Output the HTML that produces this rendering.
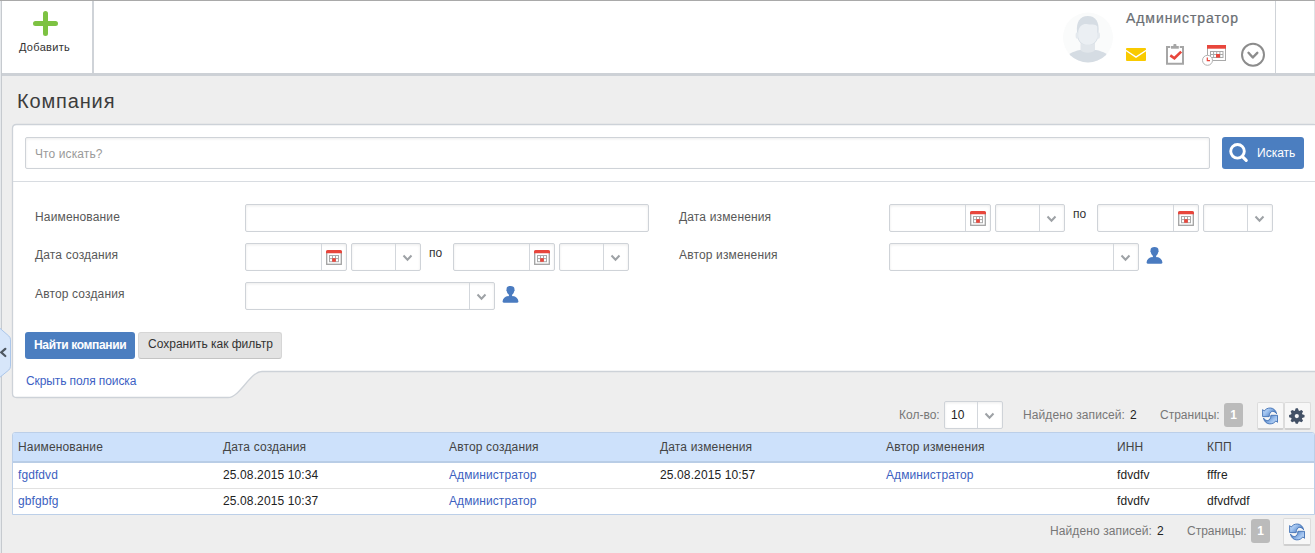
<!DOCTYPE html>
<html><head><meta charset="utf-8">
<style>
*{box-sizing:border-box;}
html,body{margin:0;padding:0;}
body{width:1315px;height:553px;overflow:hidden;background:#eeeeee;position:relative;font-family:"Liberation Sans",sans-serif;font-size:12px;color:#333;}
.a{position:absolute;}
.t{position:absolute;white-space:nowrap;line-height:14px;font-size:12px;}
.inp{position:absolute;background:#fff;border:1px solid #cfd3d8;border-radius:2px;box-shadow:inset 0 1px 3px rgba(0,0,0,0.08);}
.div{position:absolute;top:0;bottom:0;width:1px;background:#d3d7dc;}
.chev{position:absolute;}
</style></head><body>

<!-- left page border -->
<div class="a" style="left:0;top:0;width:1px;height:553px;background:#e6e9ec"></div>
<div class="a" style="left:1px;top:0;width:1px;height:553px;background:#c6cacf"></div>

<!-- HEADER -->
<div class="a" style="left:0;top:0;width:1315px;height:1px;background:#a9a9a9;z-index:2"></div>
<div class="a" style="left:2px;top:0;width:1313px;height:73px;background:#fff;border-top:1px solid #a9a9a9;"></div>
<div class="a" style="left:2px;top:73px;width:1313px;height:3px;background:#cdd1d6"></div>
<div class="a" style="left:92px;top:1px;width:2px;height:72px;background:#cfd3d8"></div>
<div class="a" style="left:1275px;top:1px;width:1px;height:72px;background:#cfd3d8"></div>
<div class="a" style="left:1314px;top:1px;width:1px;height:72px;background:#dfe2e6"></div>

<!-- add -->
<svg class="a" style="left:30px;top:8px" width="30" height="30" viewBox="0 0 30 30">
 <path d="M15.5 5.5V25.5M5.5 15.5H25.5" stroke="#7dc242" stroke-width="5" stroke-linecap="round"/>
</svg>
<div class="t" style="left:19px;top:40px;color:#333;font-size:11px;letter-spacing:0.3px">Добавить</div>

<!-- avatar -->
<svg class="a" style="left:1062px;top:12px" width="52" height="52" viewBox="0 0 52 52">
 <defs><clipPath id="avc"><circle cx="26" cy="25.5" r="25"/></clipPath></defs>
 <circle cx="26" cy="25.5" r="25" fill="#fafbfb"/>
 <g clip-path="url(#avc)">
  <path d="M-2 58 C0 45 8 40 18 38 L34 38 C44 40 52 45 54 58Z" fill="#d5dce3"/>
  <path d="M18.5 27 L18.5 38 C21 41.5 30.5 41.5 33 38 L33 27Z" fill="#e1e6eb"/>
  <path d="M15 20 C14 10 18 4 25.8 4 C33.5 4 37.5 10 36.5 20 L36 25 C35.5 30 31.5 33 25.8 33 C20 33 16 30 15.5 25Z" fill="#d6dde4"/>
  <ellipse cx="15.2" cy="23.5" rx="1.6" ry="3.2" fill="#e4e9ee"/>
  <ellipse cx="36.4" cy="23.5" rx="1.6" ry="3.2" fill="#e4e9ee"/>
  <path d="M16.3 19 C17.5 13.5 21.5 11 26 12.2 C29.5 13 33 11.5 35.3 14.5 L35.3 24 C35 29.8 31 32.8 25.8 32.8 C20.5 32.8 16.5 29.8 16.3 24Z" fill="#ebeff3"/>
 </g>
</svg>
<div class="t" style="left:1126px;top:10px;font-size:14px;line-height:16px;color:#6a6e73;letter-spacing:0.92px;-webkit-text-stroke:0.2px #6a6e73">Администратор</div>
<!-- mail -->
<svg class="a" style="left:1126px;top:48px" width="20" height="13" viewBox="0 0 20 13">
 <rect x="0" y="0" width="20" height="13" rx="1" fill="#f9ca00"/>
 <path d="M-0.5 2.2 L10 9.2 L20.5 2.2" stroke="#fff" stroke-width="1.4" fill="none" stroke-linejoin="round"/>
</svg>
<!-- clipboard -->
<svg class="a" style="left:1165px;top:43px" width="21" height="23" viewBox="0 0 21 23">
 <path d="M5.2 4 H2 V20.7 H18 V4 H14.8" stroke="#a6a6a6" stroke-width="2" fill="none"/>
 <rect x="6" y="3" width="7.8" height="2.7" fill="#a6a6a6"/>
 <rect x="8.4" y="1" width="3" height="3" rx="0.8" fill="#a6a6a6"/>
 <path d="M5.3 12.4 L9.4 15.3 L16.2 8.6" stroke="#e8463c" stroke-width="2.6" fill="none"/>
</svg>
<!-- calendar w/ clock -->
<svg class="a" style="left:1200px;top:44px" width="28" height="24" viewBox="0 0 28 24">
 <rect x="7.5" y="1.5" width="18" height="15" fill="#fff" stroke="#a9a9a9" stroke-width="1"/>
 <rect x="7" y="1" width="19" height="3.7" fill="#e8463c"/>
 <rect x="10.5" y="7.5" width="12.5" height="6" fill="#fff" stroke="#a9a9a9" stroke-width="1"/>
 <path d="M13.6 7.5V13.5M16.7 7.5V13.5M19.9 7.5V13.5M10.5 10.5H23" stroke="#a9a9a9" stroke-width="1"/>
 <rect x="16" y="10" width="4" height="3.6" fill="#e8463c"/>
 <circle cx="7.5" cy="16.3" r="5" fill="#fff" stroke="#b3b3b3" stroke-width="1"/>
 <path d="M7.3 13.5V16.6H10" stroke="#e8463c" stroke-width="1.2" fill="none"/>
</svg>
<!-- chevron circle -->
<svg class="a" style="left:1240px;top:42px" width="26" height="26" viewBox="0 0 26 26">
 <circle cx="13" cy="12.8" r="11" fill="none" stroke="#8c8c8c" stroke-width="2"/>
 <path d="M8.5 10.8 L12.8 15.5 L17.3 10.8" stroke="#8c8c8c" stroke-width="2.4" fill="none" stroke-linecap="round" stroke-linejoin="round"/>
</svg>

<!-- PAGE TITLE -->
<div class="t" style="left:17px;top:89px;font-size:20px;line-height:24px;color:#3c3c3c;letter-spacing:0.85px">Компания</div>


<!-- PANEL -->
<svg class="a" style="left:0;top:120px" width="1315" height="282" viewBox="0 120 1315 282">
 <path d="M12.5 128.5 Q12.5 124.5 16.5 124.5 L1313.5 124.5 Q1317.5 124.5 1317.5 128.5 L1317.5 371.5 L262 371.5 C250 371.5 240 397.5 228 397.5 L16.5 397.5 Q12.5 397.5 12.5 393.5 Z" fill="#fff" stroke="#cdd2d8" stroke-width="1.3"/>
 <path d="M13 181.5 H1315" stroke="#d8dce1" stroke-width="1"/>
</svg>
<!-- search -->
<div class="inp" style="left:25px;top:137px;width:1185px;height:32px;"></div>
<div class="t" style="left:35px;top:147px;color:#9a9a9a;font-size:12px;letter-spacing:0.1px">Что искать?</div>
<div class="a" style="left:1222px;top:137px;width:82px;height:32px;background:#4b7ec0;border-radius:3px"></div>
<svg class="a" style="left:1226px;top:140px" width="26" height="26" viewBox="0 0 26 26">
 <circle cx="11.5" cy="11.3" r="6.8" fill="none" stroke="#fff" stroke-width="2.9"/>
 <path d="M17.2 17.3 L20.2 20.3" stroke="#fff" stroke-width="3.2" stroke-linecap="round"/>
</svg>
<div class="t" style="left:1257px;top:146px;color:#fff;font-size:12px">Искать</div>

<!-- FORM -->
<div class="t" style="left:35px;top:210px;color:#585858;letter-spacing:0.15px">Наименование</div>
<div class="inp" style="left:245px;top:204px;width:404px;height:28px"></div>
<div class="t" style="left:35px;top:248px;color:#585858;letter-spacing:0.15px">Дата создания</div>
<div class="inp" style="left:245px;top:243px;width:102px;height:28px"></div>
<div class="a" style="left:321px;top:244px;width:1px;height:26px;background:#d3d7dc"></div>
<svg class="a" style="left:326px;top:250px" width="16" height="15" viewBox="0 0 16 15">
 <rect x="0.7" y="1.5" width="14.6" height="12.8" fill="#fff" stroke="#a2a2a2" stroke-width="1.3"/>
 <path d="M0 3.2 V1.5 Q0 0 1.5 0 H14.5 Q16 0 16 1.5 V3.2Z" fill="#e8463c"/>
 <rect x="3.5" y="5.5" width="9" height="6.2" fill="#fff" stroke="#aaa" stroke-width="1"/>
 <path d="M6.5 5.5V11.7M9.5 5.5V11.7M3.5 8.6H12.5" stroke="#aaa" stroke-width="1"/>
 <rect x="6.2" y="8.2" width="3.6" height="3.6" fill="#e8463c"/>
</svg>
<div class="inp" style="left:351px;top:243px;width:70px;height:28px"></div>
<div class="a" style="left:395px;top:244px;width:1px;height:26px;background:#d3d7dc"></div>
<svg class="a" style="left:402px;top:254px" width="11" height="8" viewBox="0 0 11 8">
 <path d="M1.5 1.5 L5.5 5.8 L9.5 1.5" stroke="#9ea2a6" stroke-width="2" fill="none"/>
</svg>
<div class="t" style="left:429px;top:246px;color:#333;">по</div>
<div class="inp" style="left:453px;top:243px;width:102px;height:28px"></div>
<div class="a" style="left:529px;top:244px;width:1px;height:26px;background:#d3d7dc"></div>
<svg class="a" style="left:534px;top:250px" width="16" height="15" viewBox="0 0 16 15">
 <rect x="0.7" y="1.5" width="14.6" height="12.8" fill="#fff" stroke="#a2a2a2" stroke-width="1.3"/>
 <path d="M0 3.2 V1.5 Q0 0 1.5 0 H14.5 Q16 0 16 1.5 V3.2Z" fill="#e8463c"/>
 <rect x="3.5" y="5.5" width="9" height="6.2" fill="#fff" stroke="#aaa" stroke-width="1"/>
 <path d="M6.5 5.5V11.7M9.5 5.5V11.7M3.5 8.6H12.5" stroke="#aaa" stroke-width="1"/>
 <rect x="6.2" y="8.2" width="3.6" height="3.6" fill="#e8463c"/>
</svg>
<div class="inp" style="left:559px;top:243px;width:70px;height:28px"></div>
<div class="a" style="left:603px;top:244px;width:1px;height:26px;background:#d3d7dc"></div>
<svg class="a" style="left:610px;top:254px" width="11" height="8" viewBox="0 0 11 8">
 <path d="M1.5 1.5 L5.5 5.8 L9.5 1.5" stroke="#9ea2a6" stroke-width="2" fill="none"/>
</svg>
<div class="t" style="left:35px;top:287px;color:#585858;letter-spacing:0.15px">Автор создания</div>
<div class="inp" style="left:245px;top:282px;width:250px;height:28px"></div>
<div class="a" style="left:469px;top:283px;width:1px;height:26px;background:#d3d7dc"></div>
<svg class="a" style="left:476px;top:293px" width="11" height="8" viewBox="0 0 11 8">
 <path d="M1.5 1.5 L5.5 5.8 L9.5 1.5" stroke="#9ea2a6" stroke-width="2" fill="none"/>
</svg>
<svg class="a" style="left:502px;top:285px" width="17" height="18" viewBox="0 0 17 18">
 <path d="M4.6 3.6 C4.6 1.8 6.1 0.9 8.5 0.9 C10.9 0.9 12.4 1.8 12.4 3.6 V4.6 C12.9 4.9 12.8 5.8 12.3 6.1 C11.9 8.3 10.5 10.2 8.5 10.2 C6.5 10.2 5.1 8.3 4.7 6.1 C4.2 5.8 4.1 4.9 4.6 4.6Z" fill="#4a7bc0"/>
 <rect x="6.9" y="9" width="3.2" height="3" fill="#4a7bc0"/>
 <path d="M0.6 16.3 C0.9 13.3 3 11.6 6.3 11.1 L8.5 11.9 L10.7 11.1 C14 11.6 16.1 13.3 16.4 16.3 C16.5 17.2 16.1 17.7 15.2 17.7 H1.8 C0.9 17.7 0.5 17.2 0.6 16.3Z" fill="#4a7bc0"/>
</svg>
<div class="t" style="left:679px;top:210px;color:#585858;letter-spacing:0.15px">Дата изменения</div>
<div class="inp" style="left:889px;top:204px;width:102px;height:28px"></div>
<div class="a" style="left:965px;top:205px;width:1px;height:26px;background:#d3d7dc"></div>
<svg class="a" style="left:970px;top:211px" width="16" height="15" viewBox="0 0 16 15">
 <rect x="0.7" y="1.5" width="14.6" height="12.8" fill="#fff" stroke="#a2a2a2" stroke-width="1.3"/>
 <path d="M0 3.2 V1.5 Q0 0 1.5 0 H14.5 Q16 0 16 1.5 V3.2Z" fill="#e8463c"/>
 <rect x="3.5" y="5.5" width="9" height="6.2" fill="#fff" stroke="#aaa" stroke-width="1"/>
 <path d="M6.5 5.5V11.7M9.5 5.5V11.7M3.5 8.6H12.5" stroke="#aaa" stroke-width="1"/>
 <rect x="6.2" y="8.2" width="3.6" height="3.6" fill="#e8463c"/>
</svg>
<div class="inp" style="left:995px;top:204px;width:70px;height:28px"></div>
<div class="a" style="left:1039px;top:205px;width:1px;height:26px;background:#d3d7dc"></div>
<svg class="a" style="left:1046px;top:215px" width="11" height="8" viewBox="0 0 11 8">
 <path d="M1.5 1.5 L5.5 5.8 L9.5 1.5" stroke="#9ea2a6" stroke-width="2" fill="none"/>
</svg>
<div class="t" style="left:1073px;top:207px;color:#333;">по</div>
<div class="inp" style="left:1097px;top:204px;width:102px;height:28px"></div>
<div class="a" style="left:1173px;top:205px;width:1px;height:26px;background:#d3d7dc"></div>
<svg class="a" style="left:1178px;top:211px" width="16" height="15" viewBox="0 0 16 15">
 <rect x="0.7" y="1.5" width="14.6" height="12.8" fill="#fff" stroke="#a2a2a2" stroke-width="1.3"/>
 <path d="M0 3.2 V1.5 Q0 0 1.5 0 H14.5 Q16 0 16 1.5 V3.2Z" fill="#e8463c"/>
 <rect x="3.5" y="5.5" width="9" height="6.2" fill="#fff" stroke="#aaa" stroke-width="1"/>
 <path d="M6.5 5.5V11.7M9.5 5.5V11.7M3.5 8.6H12.5" stroke="#aaa" stroke-width="1"/>
 <rect x="6.2" y="8.2" width="3.6" height="3.6" fill="#e8463c"/>
</svg>
<div class="inp" style="left:1203px;top:204px;width:70px;height:28px"></div>
<div class="a" style="left:1247px;top:205px;width:1px;height:26px;background:#d3d7dc"></div>
<svg class="a" style="left:1254px;top:215px" width="11" height="8" viewBox="0 0 11 8">
 <path d="M1.5 1.5 L5.5 5.8 L9.5 1.5" stroke="#9ea2a6" stroke-width="2" fill="none"/>
</svg>
<div class="t" style="left:679px;top:248px;color:#585858;letter-spacing:0.15px">Автор изменения</div>
<div class="inp" style="left:889px;top:243px;width:250px;height:28px"></div>
<div class="a" style="left:1113px;top:244px;width:1px;height:26px;background:#d3d7dc"></div>
<svg class="a" style="left:1120px;top:254px" width="11" height="8" viewBox="0 0 11 8">
 <path d="M1.5 1.5 L5.5 5.8 L9.5 1.5" stroke="#9ea2a6" stroke-width="2" fill="none"/>
</svg>
<svg class="a" style="left:1146px;top:246px" width="17" height="18" viewBox="0 0 17 18">
 <path d="M4.6 3.6 C4.6 1.8 6.1 0.9 8.5 0.9 C10.9 0.9 12.4 1.8 12.4 3.6 V4.6 C12.9 4.9 12.8 5.8 12.3 6.1 C11.9 8.3 10.5 10.2 8.5 10.2 C6.5 10.2 5.1 8.3 4.7 6.1 C4.2 5.8 4.1 4.9 4.6 4.6Z" fill="#4a7bc0"/>
 <rect x="6.9" y="9" width="3.2" height="3" fill="#4a7bc0"/>
 <path d="M0.6 16.3 C0.9 13.3 3 11.6 6.3 11.1 L8.5 11.9 L10.7 11.1 C14 11.6 16.1 13.3 16.4 16.3 C16.5 17.2 16.1 17.7 15.2 17.7 H1.8 C0.9 17.7 0.5 17.2 0.6 16.3Z" fill="#4a7bc0"/>
</svg>
<!-- buttons -->
    <div class="a" style="left:25px;top:332px;width:110px;height:27px;background:#4b7ec0;border-radius:3px"></div>
    <div class="t" style="left:34px;top:338px;color:#fff;font-weight:bold;letter-spacing:-0.35px">Найти компании</div>
    <div class="a" style="left:138px;top:332px;width:144px;height:27px;background:#e3e3e3;border:1px solid #d6d6d6;border-bottom-color:#c4c4c4;border-radius:3px"></div>
    <div class="t" style="left:148px;top:337px;color:#333">Сохранить как фильтр</div>
    <div class="t" style="left:26px;top:374px;color:#3d5fc4;letter-spacing:-0.1px">Скрыть поля поиска</div>
    <!-- /FORM -->
<!-- TABLE -->
<svg class="a" style="left:0;top:326px" width="14" height="57" viewBox="0 326 14 57">
 <path d="M-1 327.5 L8.8 336 Q10.5 337.5 10.5 339.8 L10.5 366.2 Q10.5 368.5 8.8 370 L-1 378Z" fill="#d7e6fa" stroke="#abc6ea" stroke-width="1"/>
 <path d="M5.3 348.8 L1.2 352.4 L5.3 356" stroke="#4f5862" stroke-width="2.2" fill="none" stroke-linecap="round"/>
</svg>
<div class="t" style="left:899px;top:408px;color:#777;">Кол-во:</div>
<div class="inp" style="left:944px;top:401px;width:59px;height:28px"></div>
<div class="a" style="left:977px;top:402px;width:1px;height:26px;background:#d3d7dc"></div>
<svg class="a" style="left:984px;top:412px" width="11" height="8" viewBox="0 0 11 8">
 <path d="M1.5 1.5 L5.5 5.8 L9.5 1.5" stroke="#9ea2a6" stroke-width="2" fill="none"/>
</svg>
<div class="t" style="left:951px;top:408px;color:#222;">10</div>
<div class="t" style="left:1023px;top:408px;color:#777;letter-spacing:0.1px">Найдено записей:</div>
<div class="t" style="left:1130px;top:408px;color:#222;">2</div>
<div class="t" style="left:1160px;top:408px;color:#777;">Страницы:</div>
<div class="a" style="left:1224px;top:403px;width:19px;height:24px;background:#bbbbbb;border-radius:3px;color:#fff;font-weight:bold;font-size:12px;line-height:24px;text-align:center">1</div>
<div class="a" style="left:1257px;top:402px;width:27px;height:28px;background:#f7f7f7;border:1px solid #dcdcdc;border-bottom:2px solid #cfcfcf;border-radius:2px"></div>
<div class="a" style="left:1284px;top:402px;width:27px;height:28px;background:#f7f7f7;border:1px solid #dcdcdc;border-bottom:2px solid #cfcfcf;border-radius:2px"></div>
<svg class="a" style="left:1261px;top:407px" width="18" height="18" viewBox="0 0 18 18">
 <defs><linearGradient id="rg1261407" x1="0" y1="0" x2="1" y2="0.6"><stop offset="0" stop-color="#d3e4fa"/><stop offset="0.45" stop-color="#9cc0ee"/><stop offset="1" stop-color="#3f70b6"/></linearGradient></defs>
 <g id="hrg1261407">
 <path d="M1.6 2.6 L1.6 9.6 L8.2 9.6 C8.2 6.6 9.6 4.4 11.6 4.4 C13.4 4.4 14.9 5.4 15.6 6.8 C14.9 3.2 12.3 1 9.3 1 C6.5 1 4.4 2.2 3.3 4 Z" fill="url(#rg1261407)" stroke="#4170b4" stroke-width="0.9" stroke-linejoin="miter"/>
 </g>
 <use href="#hrg1261407" transform="rotate(180 9.05 8.95)"/>
</svg>
<svg class="a" style="left:0;top:0" width="1315" height="553">
 <path d="M1302.04 414.13 L1304.53 415.05 L1304.53 417.15 L1302.04 418.07 L1301.90 418.41 L1303.01 420.82 L1301.52 422.31 L1299.11 421.20 L1298.77 421.34 L1297.85 423.83 L1295.75 423.83 L1294.83 421.34 L1294.49 421.20 L1292.08 422.31 L1290.59 420.82 L1291.70 418.41 L1291.56 418.07 L1289.07 417.15 L1289.07 415.05 L1291.56 414.13 L1291.70 413.79 L1290.59 411.38 L1292.08 409.89 L1294.49 411.00 L1294.83 410.86 L1295.75 408.37 L1297.85 408.37 L1298.77 410.86 L1299.11 411.00 L1301.52 409.89 L1303.01 411.38 L1301.90 413.79Z" fill="#435166"/><circle cx="1296.8" cy="416.1" r="5.7" fill="#435166"/><circle cx="1296.8" cy="416.1" r="2.1" fill="#f7f7f7"/>
</svg>
<div class="a" style="left:12px;top:432px;width:1303px;height:83px;background:#fff;border:1px solid #bccfe8;border-radius:3px 3px 0 0"></div>
<div class="a" style="left:13px;top:433px;width:1301px;height:28px;background:#cde1fb;border-radius:2px 2px 0 0"></div>
<div class="a" style="left:13px;top:461px;width:1301px;height:2px;background:#b9cde6"></div>
<div class="a" style="left:13px;top:488px;width:1301px;height:1px;background:#e1e1e1"></div>
<div class="t" style="left:18px;top:440px;color:#444;letter-spacing:0.15px">Наименование</div>
<div class="t" style="left:223px;top:440px;color:#444;letter-spacing:0.15px">Дата создания</div>
<div class="t" style="left:449px;top:440px;color:#444;letter-spacing:0.15px">Автор создания</div>
<div class="t" style="left:660px;top:440px;color:#444;letter-spacing:0.15px">Дата изменения</div>
<div class="t" style="left:886px;top:440px;color:#444;letter-spacing:0.15px">Автор изменения</div>
<div class="t" style="left:1117px;top:440px;color:#444;letter-spacing:0.15px">ИНН</div>
<div class="t" style="left:1207px;top:440px;color:#444;letter-spacing:0.15px">КПП</div>
<div class="t" style="left:18px;top:468px;color:#3c5fbf;letter-spacing:0.08px">fgdfdvd</div>
<div class="t" style="left:223px;top:468px;color:#222;letter-spacing:0.12px">25.08.2015 10:34</div>
<div class="t" style="left:449px;top:468px;color:#3c5fbf;letter-spacing:0.08px">Администратор</div>
<div class="t" style="left:660px;top:468px;color:#222;letter-spacing:0.12px">25.08.2015 10:57</div>
<div class="t" style="left:886px;top:468px;color:#3c5fbf;letter-spacing:0.08px">Администратор</div>
<div class="t" style="left:1117px;top:468px;color:#222;letter-spacing:0.08px">fdvdfv</div>
<div class="t" style="left:1207px;top:468px;color:#222;letter-spacing:0.08px">fffre</div>
<div class="t" style="left:18px;top:494px;color:#3c5fbf;letter-spacing:0.08px">gbfgbfg</div>
<div class="t" style="left:223px;top:494px;color:#222;letter-spacing:0.12px">25.08.2015 10:37</div>
<div class="t" style="left:449px;top:494px;color:#3c5fbf;letter-spacing:0.08px">Администратор</div>
<div class="t" style="left:1117px;top:494px;color:#222;letter-spacing:0.08px">fdvdfv</div>
<div class="t" style="left:1207px;top:494px;color:#222;letter-spacing:0.08px">dfvdfvdf</div>
<div class="t" style="left:1050px;top:524px;color:#777;letter-spacing:0.1px">Найдено записей:</div>
<div class="t" style="left:1157px;top:524px;color:#222;">2</div>
<div class="t" style="left:1187px;top:524px;color:#777;">Страницы:</div>
<div class="a" style="left:1251px;top:519px;width:19px;height:24px;background:#bbbbbb;border-radius:3px;color:#fff;font-weight:bold;font-size:12px;line-height:24px;text-align:center">1</div>
<div class="a" style="left:1283px;top:518px;width:28px;height:28px;background:#f7f7f7;border:1px solid #dcdcdc;border-bottom:2px solid #cfcfcf;border-radius:2px"></div>
<svg class="a" style="left:1288px;top:523px" width="18" height="18" viewBox="0 0 18 18">
 <defs><linearGradient id="rg1288523" x1="0" y1="0" x2="1" y2="0.6"><stop offset="0" stop-color="#d3e4fa"/><stop offset="0.45" stop-color="#9cc0ee"/><stop offset="1" stop-color="#3f70b6"/></linearGradient></defs>
 <g id="hrg1288523">
 <path d="M1.6 2.6 L1.6 9.6 L8.2 9.6 C8.2 6.6 9.6 4.4 11.6 4.4 C13.4 4.4 14.9 5.4 15.6 6.8 C14.9 3.2 12.3 1 9.3 1 C6.5 1 4.4 2.2 3.3 4 Z" fill="url(#rg1288523)" stroke="#4170b4" stroke-width="0.9" stroke-linejoin="miter"/>
 </g>
 <use href="#hrg1288523" transform="rotate(180 9.05 8.95)"/>
</svg>
<!-- /TABLE -->
</body></html>
